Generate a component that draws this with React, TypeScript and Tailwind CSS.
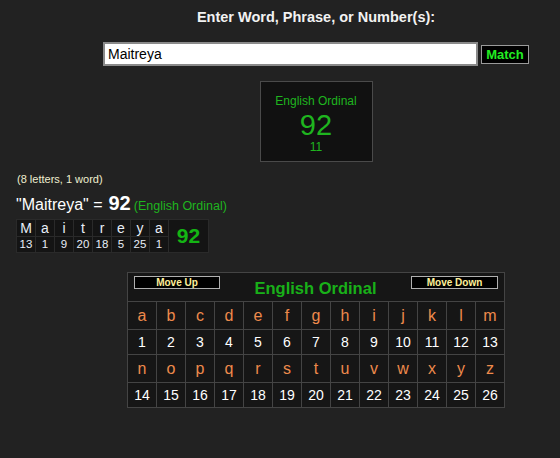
import React from 'react'

const word = [
  ['M', 13], ['a', 1], ['i', 9], ['t', 20], ['r', 18], ['e', 5], ['y', 25], ['a', 1],
] as const

const alpha = 'abcdefghijklmnopqrstuvwxyz'.split('')

export default function App() {
  const rows = [alpha.slice(0, 13), alpha.slice(13)]
  return (
    <div className="w-[560px] h-[458px] overflow-hidden bg-[#222222]" style={{ fontFamily: '"Liberation Sans", Arial, sans-serif' }}>
      <div className="w-[600px] ml-[16px] flex flex-col">
        <div className="pt-[9px] text-center text-[14.5px] font-bold text-[#f2f2f2] leading-[16px]">
          Enter Word, Phrase, or Number(s):
        </div>

        <div className="mt-[17px] flex justify-center items-center gap-[3px]">
          <div className="w-[375px] h-[24px] bg-white border-2 border-[#8a8a8a] flex items-center px-[3px] text-[14px] text-black">
            Maitreya
          </div>
          <button className="w-[48px] h-[19px] bg-black border border-[#9a9a9a] text-[13px] font-bold text-[#22ee22] leading-none flex items-center justify-center">
            Match
          </button>
        </div>

        <div className="mt-[15px] self-center w-[113px] h-[81px] bg-[#111111] border border-[#4a4a4a] flex flex-col items-center text-[#1fb51f]">
          <div className="mt-[12px] text-[12px] leading-[14px]">English Ordinal</div>
          <div className="text-[29px] leading-[30px] mt-[2px]">92</div>
          <div className="text-[12px] leading-[13px] mt-[1px]">11</div>
        </div>

        <div className="mt-[10px] ml-[1px] text-[11px] text-[#eeeed0] leading-[14px]">(8 letters, 1 word)</div>

        <div className="mt-[7px] flex items-baseline leading-[20px]">
          <span className="text-[16px] text-white">"Maitreya" = </span>
          <span className="ml-[6px] text-[20px] font-black text-white">92</span>
          <span className="ml-[3px] text-[12.5px] text-[#1fb51f]">(English Ordinal)</span>
        </div>

        <div className="mt-[3px] flex">
          <table className="border-collapse bg-[#141414]">
            <tbody>
              <tr>
                {word.map(([l], i) => (
                  <td key={i} className="w-[19px] h-[17px] p-0 border border-[#2a2a2a] text-center text-[14px] text-[#e8eef8] leading-none">{l}</td>
                ))}
                <td rowSpan={2} className="w-[40px] p-0 border border-[#2a2a2a] text-center text-[21px] font-bold text-[#14b414]">92</td>
              </tr>
              <tr>
                {word.map(([, n], i) => (
                  <td key={i} className="w-[19px] h-[16px] p-0 border border-[#2a2a2a] text-center text-[11.5px] text-[#e8eef8] leading-none">{n}</td>
                ))}
              </tr>
            </tbody>
          </table>
        </div>

        <div className="mt-[19px] flex justify-center">
          <table className="border-collapse bg-[#161616]">
            <tbody>
              <tr>
                <td colSpan={13} className="h-[29px] p-0 border border-[#444444] align-top">
                  <div className="flex items-start justify-between px-[6px] pt-[3px]">
                    <button className="w-[86px] h-[13px] bg-black border border-[#b0b0b0] text-[10px] font-bold text-[#fff09a] leading-none flex items-center justify-center">Move Up</button>
                    <span className="text-[16.5px] font-bold text-[#19b019] leading-[20px] mt-[2px]">English Ordinal</span>
                    <button className="w-[87px] h-[13px] bg-black border border-[#b0b0b0] text-[10px] font-bold text-[#fff09a] leading-none flex items-center justify-center">Move Down</button>
                  </div>
                </td>
              </tr>
              {rows.map((r, ri) => (
                <React.Fragment key={ri}>
                  <tr>
                    {r.map((l) => (
                      <td key={l} className="w-[29px] h-[28px] p-0 border border-[#444444] text-center text-[16px] text-[#ee8a4c] leading-none">{l}</td>
                    ))}
                  </tr>
                  <tr>
                    {r.map((l, i) => (
                      <td key={l} className="w-[29px] h-[25px] p-0 border border-[#444444] text-center text-[14px] text-white leading-none">{ri * 13 + i + 1}</td>
                    ))}
                  </tr>
                </React.Fragment>
              ))}
            </tbody>
          </table>
        </div>
      </div>
    </div>
  )
}
